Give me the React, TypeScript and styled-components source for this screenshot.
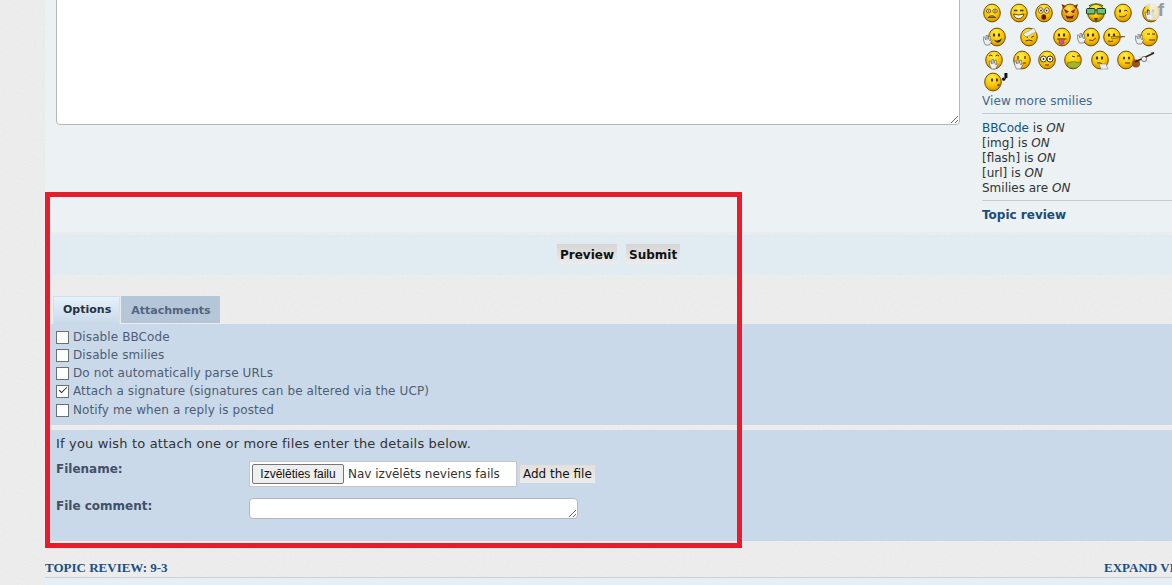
import React, { useId } from "react";
import styled, { createGlobalStyle } from "styled-components";

const noise =
  "data:image/svg+xml,%3Csvg xmlns='http://www.w3.org/2000/svg' width='200' height='200'%3E%3Cfilter id='n'%3E%3CfeTurbulence type='fractalNoise' baseFrequency='1.1' numOctaves='2'/%3E%3CfeColorMatrix values='0 0 0 0 0.5 0 0 0 0 0.5 0 0 0 0 0.5 0 0 0 0.09 0'/%3E%3C/filter%3E%3Crect width='200' height='200' filter='url(%23n)'/%3E%3C/svg%3E";

const Global = createGlobalStyle`
  html, body { margin: 0; padding: 0; background: #eeeeee url("${noise}"); }
  body { font-family: "DejaVu Sans", Verdana, sans-serif; font-size: 12px; color: #333; }
`;

const Page = styled.div`
  position: relative;
  width: 1172px;
  height: 585px;
  overflow: hidden;
  padding-left: 45px;
  box-sizing: border-box;
  display: flex;
  flex-direction: column;
`;
const EditorPanel = styled.section`
  height: 232px;
  flex: none;
  background: #ecf1f4;
  display: flex;
  overflow: hidden;
`;
const EditorColumn = styled.div`
  width: 937px;
  flex: none;
  padding-left: 11px;
  box-sizing: border-box;
`;
const MessageBox = styled.textarea`
  display: block;
  width: 904px;
  height: 135px;
  margin-top: -10px;
  box-sizing: border-box;
  background: #fff;
  border: 1px solid #b4b8bc;
  border-radius: 4px;
  outline: none;
`;
const Sidebar = styled.aside`
  flex: 1;
  line-height: 15px;
`;
const SmileyRow = styled.div<{ $h: number }>`
  display: flex;
  height: ${(p) => p.$h}px;
  align-items: center;
`;
const SmileyCell = styled.span<{ $w: number }>`
  flex: none;
  width: ${(p) => p.$w}px;
  display: flex;
  justify-content: center;
`;
const Smilies = styled.div`
  width: 190px;
  margin-left: -4px;
`;
const FaceSvg = styled.svg`
  flex: none;
`;
const MoreLink = styled.a`
  display: block;
  color: #3d6a92;
  padding-top: 1px;
  height: 19px;
  line-height: 15px;
  letter-spacing: 0.1px;
`;
const SideBlock = styled.div`
  border-top: 1px solid #c5ccd1;
  padding: 7px 0 4px;
  color: #333;
`;
const SideLine = styled.div``;
const SideLink = styled.a`
  color: #105289;
`;
const On = styled.em`
  font-style: italic;
`;
const ReviewLink = styled.a`
  display: block;
  font-weight: bold;
  font-size: 12px;
  color: #1b4c7a;
  line-height: 15px;
`;
const ButtonStrip = styled.div`
  flex: none;
  margin-top: 3px;
  height: 40px;
  box-sizing: border-box;
  padding: 0 0 2px 512px;
  background: #e1ebf2;
  display: flex;
  align-items: center;
  gap: 9px;
`;
const ActionButton = styled.button`
  height: 20px;
  padding: 2px 3px 0;
  border: 0;
  background: linear-gradient(#d5d5d5, #ececec);
  font: bold 12px "DejaVu Sans", sans-serif;
  color: #111;
`;
const TabBar = styled.div`
  flex: none;
  margin-top: 21px;
  height: 28px;
  padding-left: 8px;
  display: flex;
  gap: 1px;
  align-items: flex-start;
`;
const Tab = styled.div<{ $active?: boolean }>`
  box-sizing: border-box;
  height: ${(p) => (p.$active ? 28 : 27)}px;
  padding: ${(p) => (p.$active ? "0 8px 2px 9px" : "2px 9px 0 10px")};
  display: flex;
  align-items: center;
  font-weight: bold;
  font-size: 11px;
  color: ${(p) => (p.$active ? "#28313f" : "#536482")};
  background: ${(p) => (p.$active ? "linear-gradient(#e6f2fb, #c9d9e9)" : "#b4c6d8")};
  border-top: ${(p) => (p.$active ? "1px solid #d2e0ec" : "0")};
  border-left: ${(p) => (p.$active ? "1px solid #d2e0ec" : "0")};
  border-right: ${(p) => (p.$active ? "1px solid #d2e0ec" : "0")};
`;
const OptionsPanel = styled.section`
  flex: none;
  height: 101px;
  background: #c9d9e9;
  padding: 4px 0 0 11px;
  box-sizing: border-box;
  display: flex;
  flex-direction: column;
`;
const OptionRow = styled.label`
  display: flex;
  align-items: center;
  height: 18px;
  color: #4e5d75;
  letter-spacing: 0.1px;
  &:last-child {
    margin-top: 1px;
  }
`;
const Check = styled.input`
  appearance: none;
  position: relative;
  box-sizing: border-box;
  width: 13px;
  height: 13px;
  margin: 1px 4px 0 0;
  flex: none;
  background: #fff;
  border: 1px solid #6f6f6f;
  border-radius: 0;
  &:checked::after {
    content: "";
    position: absolute;
    left: 2px;
    top: 1px;
    width: 7px;
    height: 3px;
    border-left: 1.2px solid #333;
    border-bottom: 1.2px solid #333;
    transform: rotate(-45deg);
  }
`;
const AttachPanel = styled.section`
  flex: none;
  margin-top: 5px;
  height: 111px;
  background: #c9d9e9;
  padding: 6px 0 0 11px;
  box-sizing: border-box;
`;
const Intro = styled.p`
  margin: 0;
  height: 15px;
  line-height: 15px;
  font-size: 13px;
  color: #333;
  letter-spacing: 0.17px;
`;
const FieldRow = styled.div<{ $top: number }>`
  display: grid;
  grid-template-columns: 193px auto;
  justify-content: start;
  margin-top: ${(p) => p.$top}px;
`;
const FieldLabel = styled.div`
  font-weight: bold;
  color: #425067;
  padding-top: 1px;
  line-height: 15px;
`;
const FileControls = styled.div`
  display: flex;
  align-items: center;
  gap: 3px;
`;
const FileBox = styled.div`
  box-sizing: border-box;
  width: 268px;
  height: 26px;
  background: #fff;
  border: 1px solid #c8c5c2;
  display: flex;
  align-items: center;
  padding-left: 2px;
`;
const ChooseButton = styled.button`
  box-sizing: border-box;
  width: 92px;
  height: 20px;
  padding: 0;
  background: #efefef;
  border: 1px solid #767676;
  border-radius: 2px;
  font: 12px "Liberation Sans", Arial, sans-serif;
  color: #111;
`;
const NoFile = styled.span`
  margin-left: 4px;
  color: #333;
`;
const AddButton = styled.button`
  height: 18px;
  padding: 0 3px;
  border: 0;
  background: linear-gradient(#e4e0dc, #ececec);
  font: 12px "DejaVu Sans", sans-serif;
  color: #111;
`;
const CommentBox = styled.textarea`
  display: block;
  box-sizing: border-box;
  width: 329px;
  height: 21px;
  background: #fff;
  border: 1px solid #b4b8bc;
  border-radius: 4px;
  outline: none;
  margin: 0;
`;
const ReviewHeading = styled.div`
  flex: none;
  margin-top: 1px;
  height: 36px;
  border-bottom: 1px solid #cfcfcf;
  box-sizing: border-box;
  display: flex;
  justify-content: space-between;
  align-items: flex-end;
  padding-bottom: 1px;
  font: bold 13px "Liberation Serif", Georgia, serif;
  color: #1a4f85;
  white-space: nowrap;
`;
const ExpandLink = styled.span`
  flex: none;
  width: 68px;
  overflow: hidden;
`;
const ReviewBody = styled.div`
  flex: 1;
  background: #e6eff5;
`;
const Highlight = styled.div`
  position: absolute;
  left: 45px;
  top: 192px;
  width: 697px;
  height: 356px;
  box-sizing: border-box;
  border: 5px solid #e81c2a;
  pointer-events: none;
`;
const ShareTab = styled.div`
  position: absolute;
  right: 0;
  top: 0;
  width: 22px;
  height: 20px;
  background: rgba(240, 242, 244, 0.75);
  color: #9a9a9a;
  font: bold 19px/20px "Liberation Sans", sans-serif;
  text-align: center;
`;

type Kind = "sad" | "grin" | "shock" | "devil" | "nerd" | "wink" | "palm" | "peace" | "bandage" | "tongue" | "wave" | "nose" | "thumb" | "gasp" | "hand" | "goggle" | "sick" | "think" | "violin" | "whistle";

const Eyes = () => (
  <g fill="#4a3000">
    <ellipse cx="7" cy="8" rx="1.2" ry="1.7" />
    <ellipse cx="12" cy="8" rx="1.2" ry="1.7" />
  </g>
);
const WhiteHand = ({ x, y }: { x: number; y: number }) => (
  <g transform={`translate(${x} ${y})`} fill="#eee" stroke="#666" strokeWidth="0.7">
    <path d="M1 7 L0 2 L1.5 2 L3 5 L3 0.5 L4.5 0.5 L5 4.5 L6 1 L7.5 1.5 L6.8 6 L8 4.5 L9 5.5 L6.5 10 L2.5 10 Z" />
  </g>
);

const extras: Record<Kind, React.ReactNode> = {
  sad: (<><ellipse cx="6.6" cy="8" rx="2.2" ry="1.9" fill="#fff3c0" stroke="#5a3b00" strokeWidth=".8" /><ellipse cx="13" cy="8" rx="2.2" ry="1.9" fill="#fff3c0" stroke="#5a3b00" strokeWidth=".8" /><circle cx="6.6" cy="8" r=".8" fill="#333" /><circle cx="13" cy="8" r=".8" fill="#333" /><path d="M6 14.5 Q9.7 11 13.5 14.5Z" fill="#999" stroke="#5a3b00" strokeWidth=".9" /></>),
  grin: (<><path d="M5 7.5 h3.5 M11 7.5 h3.5" stroke="#4a3000" strokeWidth="1.3" /><path d="M4.5 11 Q9.5 13 15 11 Q14 15.5 9.5 15.5 Q5.5 15.5 4.5 11Z" fill="#fff" stroke="#5a3b00" strokeWidth=".9" /></>),
  shock: (<><ellipse cx="6.8" cy="7.5" rx="2.4" ry="2.8" fill="#fff" stroke="#5a3b00" strokeWidth=".8" /><ellipse cx="12.8" cy="7.5" rx="2.4" ry="2.8" fill="#fff" stroke="#5a3b00" strokeWidth=".8" /><circle cx="7" cy="7.5" r=".9" fill="#222" /><circle cx="12.6" cy="7.5" r=".9" fill="#222" /><ellipse cx="9.8" cy="14" rx="2.4" ry="2.8" fill="#5a1800" /></>),
  devil: (<><path d="M1.5 1 L3 6 L6 3Z M18 1 L16.5 6 L13.5 3Z" fill="#7a3b00" /><path d="M4.5 6.5 L8.5 8.5 L6 10Z M15 6.5 L11 8.5 L13.5 10Z" fill="#d8131b" stroke="#501000" strokeWidth=".5" /><path d="M5.5 12 Q9.7 15 14 12 L12.5 15.5 H7Z" fill="#521800" /></>),
  nerd: (<><rect x="0.5" y="5.5" width="8.5" height="5.5" rx="1" fill="#66c47a" stroke="#203020" /><rect x="11" y="5.5" width="8.5" height="5.5" rx="1" fill="#66c47a" stroke="#203020" /><path d="M9 7 h2" stroke="#203020" /><path d="M8 15 h4 l-2 4Z" fill="#523a10" /><path d="M3 3 Q10 -1 17 3" stroke="#5d7a20" fill="none" strokeWidth="1.5" /></>),
  wink: (<><ellipse cx="7" cy="8" rx="1.1" ry="1.7" fill="#4a3000" /><path d="M11 8 q2 -1.5 3.5 0" stroke="#4a3000" fill="none" /><path d="M6 13 Q10 15.5 14 11.5" stroke="#6a4400" fill="none" /></>),
  palm: (<><Eyes /><WhiteHand x={4} y={7} /><path d="M4 3 Q10 0 16 4" stroke="#ddd" strokeWidth="2" fill="none" /></>),
  peace: (<><Eyes /><path d="M6 12 Q10 16 15 11 Q13 17 9 15Z" fill="#222" /><WhiteHand x={-4} y={8} /></>),
  bandage: (<><path d="M6 9 l3 1.5 M15 9 l-3 1.5" stroke="#4a3000" /><path d="M6.5 14 Q10 12 13.5 14" stroke="#4a3000" fill="none" /><path d="M4 7 L15 1 L17 5 L7 10Z" fill="#eee" stroke="#888" strokeWidth=".6" /></>),
  tongue: (<><Eyes /><path d="M5 12 H14.5" stroke="#4a3000" /><path d="M7 12 h5 v4 q-2.5 3 -5 0Z" fill="#d8508f" stroke="#7a3060" strokeWidth=".5" /></>),
  wave: (<><Eyes /><path d="M8 13 Q12 15 15 11" stroke="#5a3b00" fill="none" /><WhiteHand x={-4} y={6} /></>),
  nose: (<><Eyes /><path d="M9 9.5 H23 L10 12Z" fill="#f0b400" stroke="#7a5500" strokeWidth=".7" /><path d="M6 14 q3 1 5 0" stroke="#5a3b00" fill="none" /></>),
  thumb: (<><path d="M8 7 h3 M13 7 h3" stroke="#4a3000" /><path d="M10 13 h6" stroke="#4a3000" /><WhiteHand x={-4} y={7} /></>),
  gasp: (<><path d="M5 6 q2 -2 3.5 0 M11.5 6 q2 -2 3.5 0" stroke="#4a3000" fill="none" /><WhiteHand x={5} y={9} /></>),
  hand: (<><path d="M6 6 v3 M13 6 v3" stroke="#4a3000" strokeWidth="1.2" /><path d="M11 13 h3" stroke="#4a3000" /><WhiteHand x={2} y={9} /></>),
  goggle: (<><circle cx="6.5" cy="9" r="3" fill="#fff" stroke="#4a3000" /><circle cx="13" cy="9" r="3" fill="#fff" stroke="#4a3000" /><circle cx="6.5" cy="9" r="1" fill="#222" /><circle cx="13" cy="9" r="1" fill="#222" /><path d="M8 15 h4" stroke="#4a3000" /></>),
  sick: (<><path d="M9 6 l3 1 M14 6 h3" stroke="#4a3000" /><path d="M4 13 Q10 10 18 13 Q16 19 9 18 Q4 18 4 13Z" fill="#a3b52e" stroke="#5c6a10" strokeWidth=".6" /></>),
  think: (<><Eyes /><path d="M7 13 q3 -1 5 1" stroke="#4a3000" fill="none" /><path d="M9 14 h7 l2 5 h-7Z" fill="#eee" stroke="#777" strokeWidth=".5" /></>),
  violin: (<><ellipse cx="8" cy="8" rx="1.1" ry="1.6" fill="#4a3000" /><ellipse cx="13" cy="8" rx="1.1" ry="1.6" fill="#4a3000" /><path d="M9 13 h5" stroke="#4a3000" /></>),
  whistle: (<><ellipse cx="9" cy="8" rx="1.1" ry="1.7" fill="#4a3000" /><ellipse cx="14" cy="8" rx="1.1" ry="1.7" fill="#4a3000" /><circle cx="15.5" cy="13" r="1.2" fill="#6a4400" /></>),
};

const widths: Partial<Record<Kind, [number, number]>> = {
  violin: [40, 0],
  whistle: [26, 0],
  peace: [24, 4],
  wave: [24, 4],
  thumb: [24, 4],
  nose: [26, 0],
};

const Smiley = ({ kind }: { kind: Kind }) => {
  const id = useId();
  const [w, dx] = widths[kind] ?? [20, 0];
  return (
    <FaceSvg width={w} height="20" viewBox={`0 0 ${w} 20`} aria-hidden>
      <defs>
        <radialGradient id={id} cx="0.45" cy="0.28" r="0.8">
          <stop offset="0" stopColor="#fff04a" />
          <stop offset="0.55" stopColor={kind === "devil" ? "#e89a10" : "#fcc400"} />
          <stop offset="1" stopColor={kind === "nerd" ? "#6d5a10" : "#c97f00"} />
        </radialGradient>
      </defs>
      <g transform={`translate(${dx} 0)`}>
        <ellipse cx="10" cy="10" rx="8.3" ry="8.9" fill={`url(#${id})`} stroke="#6e5000" strokeWidth="1" />
        {extras[kind]}
      </g>
      {kind === "violin" && (
        <g>
          <ellipse cx="20" cy="13.5" rx="4" ry="4" fill="#a0501c" />
          <path d="M19 12 L38 3" stroke="#3a2010" strokeWidth="1.4" />
          <path d="M22 6 L34 13" stroke="#ddd" strokeWidth="1.4" />
          <circle cx="28" cy="9" r="2.6" fill="#eee" stroke="#333" strokeWidth=".6" />
          <path d="M34 3 l4 -1 v2Z" fill="#522" />
        </g>
      )}
      {kind === "whistle" && <path d="M22 7 V1.5 h1.8 V6 M22 7 a1.2 1.2 0 1 1 -1.4 -1.2" stroke="#111" strokeWidth="1.2" fill="#111" />}
    </FaceSvg>
  );
};

const rows: { h: number; cells: [Kind, number][] }[] = [
  { h: 25, cells: [["sad", 28], ["grin", 25], ["shock", 26], ["devil", 25], ["nerd", 27], ["wink", 28], ["palm", 27]] },
  { h: 24, cells: [["peace", 34], ["bandage", 34], ["tongue", 32], ["wave", 22], ["nose", 30], ["thumb", 34]] },
  { h: 22, cells: [["gasp", 31], ["hand", 25], ["goggle", 26], ["sick", 26], ["think", 27], ["violin", 46]] },
  { h: 22, cells: [["whistle", 36]] },
];

const options: [string, boolean][] = [
  ["Disable BBCode", false],
  ["Disable smilies", false],
  ["Do not automatically parse URLs", false],
  ["Attach a signature (signatures can be altered via the UCP)", true],
  ["Notify me when a reply is posted", false],
];

export default function App() {
  return (
    <>
      <Global />
      <Page>
        <EditorPanel>
          <EditorColumn>
            <MessageBox readOnly />
          </EditorColumn>
          <Sidebar>
            <Smilies>
              {rows.map((r, i) => (
                <SmileyRow key={i} $h={r.h}>
                  {r.cells.map(([k, w], j) => (
                    <SmileyCell key={j} $w={w}>
                      <Smiley kind={k} />
                    </SmileyCell>
                  ))}
                </SmileyRow>
              ))}
            </Smilies>
            <MoreLink>View more smilies</MoreLink>
            <SideBlock>
              <SideLine><SideLink>BBCode</SideLink> is <On>ON</On></SideLine>
              <SideLine>[img] is <On>ON</On></SideLine>
              <SideLine>[flash] is <On>ON</On></SideLine>
              <SideLine>[url] is <On>ON</On></SideLine>
              <SideLine>Smilies are <On>ON</On></SideLine>
            </SideBlock>
            <SideBlock>
              <ReviewLink>Topic review</ReviewLink>
            </SideBlock>
          </Sidebar>
        </EditorPanel>
        <ButtonStrip>
          <ActionButton>Preview</ActionButton>
          <ActionButton>Submit</ActionButton>
        </ButtonStrip>
        <TabBar>
          <Tab $active>Options</Tab>
          <Tab>Attachments</Tab>
        </TabBar>
        <OptionsPanel>
          {options.map(([label, on]) => (
            <OptionRow key={label}>
              <Check type="checkbox" defaultChecked={on} />
              {label}
            </OptionRow>
          ))}
        </OptionsPanel>
        <AttachPanel>
          <Intro>If you wish to attach one or more files enter the details below.</Intro>
          <FieldRow $top={10}>
            <FieldLabel>Filename:</FieldLabel>
            <FileControls>
              <FileBox>
                <ChooseButton>Izvēlēties failu</ChooseButton>
                <NoFile>Nav izvēlēts neviens fails</NoFile>
              </FileBox>
              <AddButton>Add the file</AddButton>
            </FileControls>
          </FieldRow>
          <FieldRow $top={11}>
            <FieldLabel>File comment:</FieldLabel>
            <CommentBox readOnly />
          </FieldRow>
        </AttachPanel>
        <ReviewHeading>
          <span>TOPIC REVIEW: 9-3</span>
          <ExpandLink>EXPAND VIEW</ExpandLink>
        </ReviewHeading>
        <ReviewBody />
        <ShareTab>f</ShareTab>
        <Highlight />
      </Page>
    </>
  );
}
